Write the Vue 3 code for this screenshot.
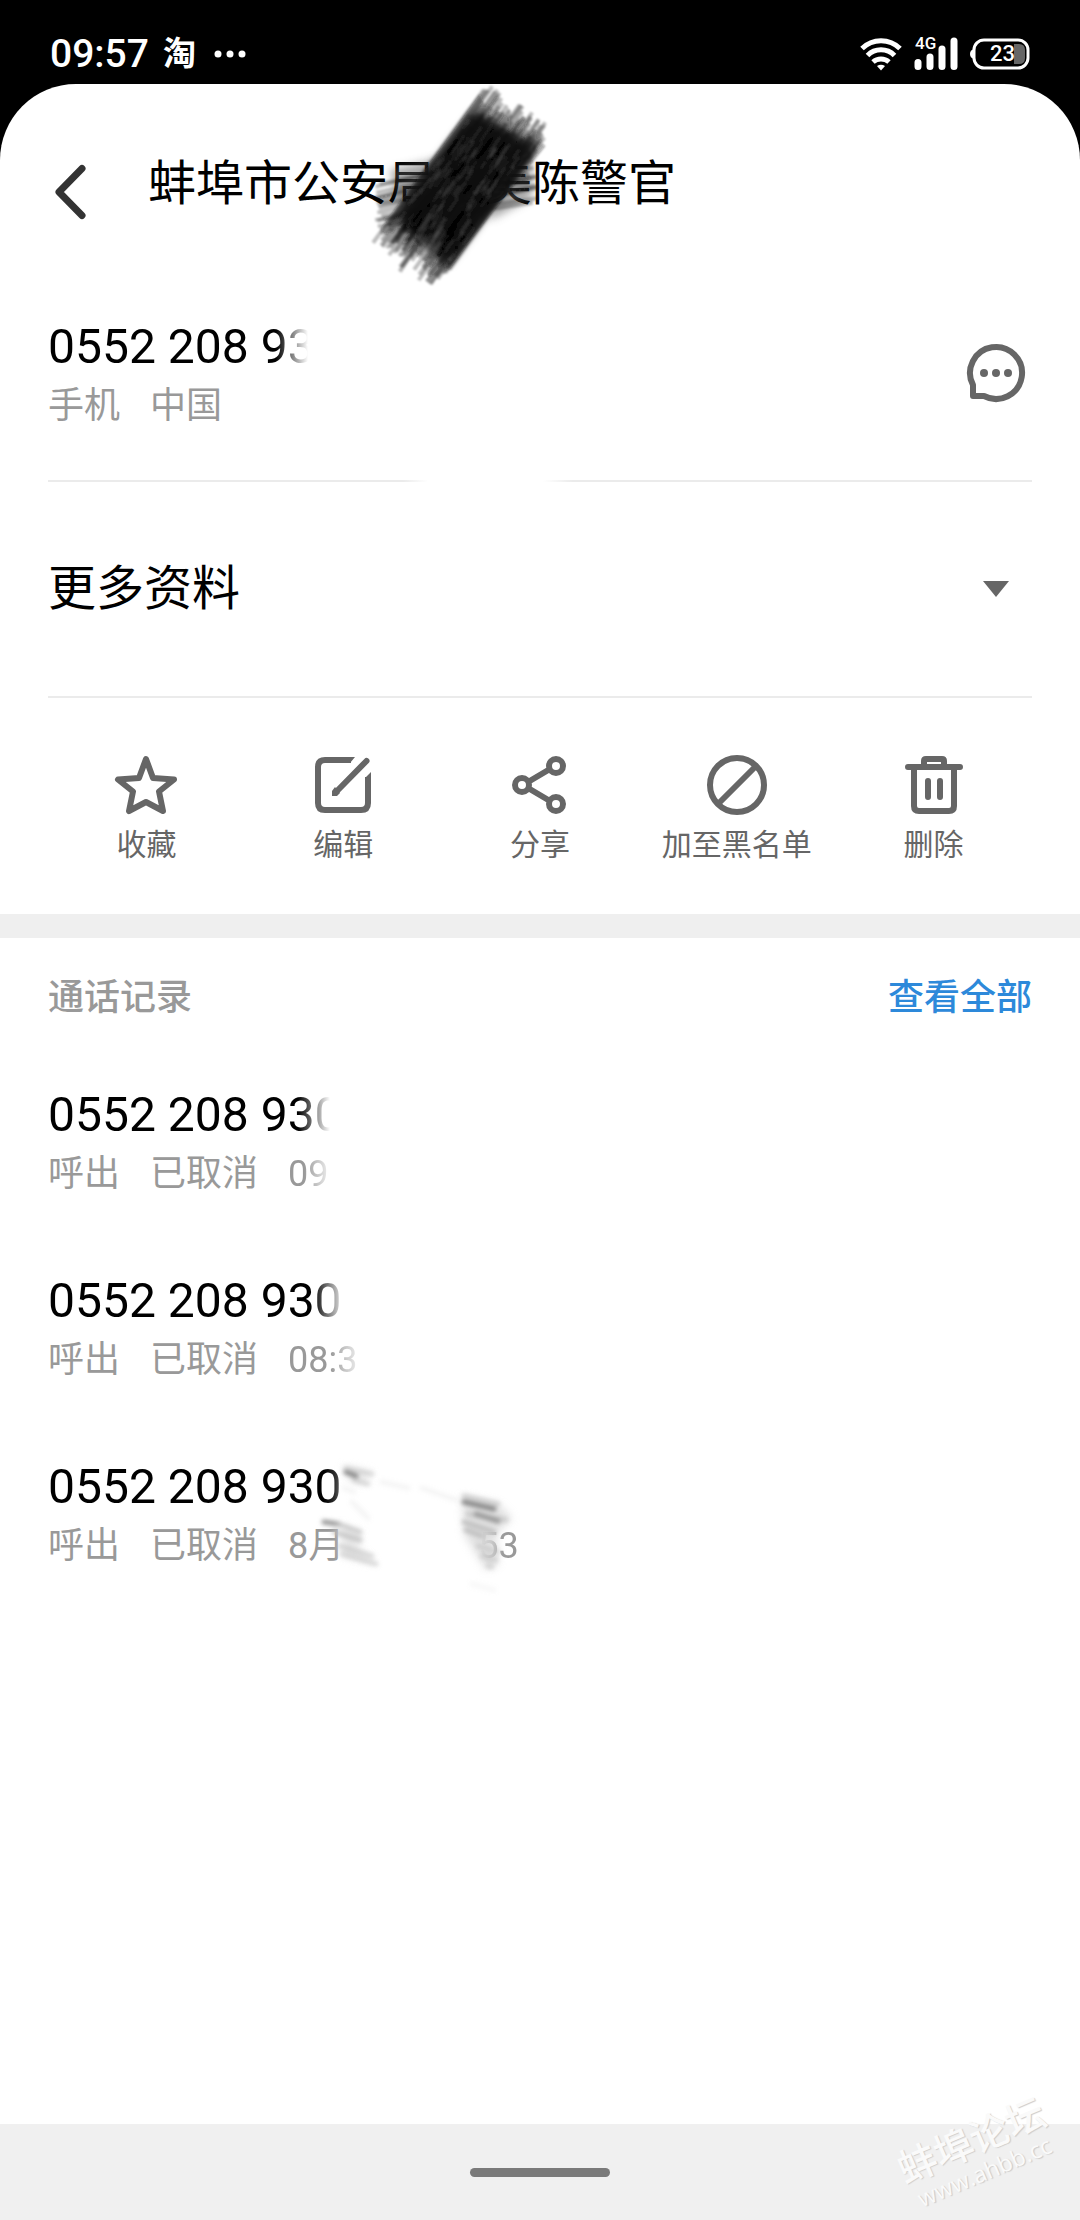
<script setup>
const number = '0552 208 93'

const actions = [
  { id: 'star', label: '收藏' },
  { id: 'edit', label: '编辑' },
  { id: 'share', label: '分享' },
  { id: 'block', label: '加至黑名单' },
  { id: 'trash', label: '删除' },
]

const calls = [
  { number: number + '0', time: '09', numberFade: [250, 282], timeFade: [16, 46] },
  { number: number + '0', time: '08:3', numberFade: [264, 298], timeFade: [42, 76] },
  { number: number + '0', time: '8月', tail: '53', numberFade: [276, 340] },
]

function fade(range) {
  if (!range) return null
  return { maskImage: `linear-gradient(to right, #000 ${range[0]}px, transparent ${range[1]}px)` }
}

// Small seeded generator, so that the brush strokes are the same on every load
let seed = 11
function rnd() {
  seed = (seed * 16807) % 2147483647
  return seed / 2147483647
}

function brush(count, from, to, spread) {
  return Array.from({ length: count }, (_, i) => {
    const t = (i + rnd()) / count
    const a = (rnd() - 0.5) * spread
    const b = (rnd() - 0.5) * spread
    const x1 = from[0] + (from[2] - from[0]) * t + a * 0.57
    const y1 = from[1] + (from[3] - from[1]) * t - a * 0.82
    const x2 = to[0] + (to[2] - to[0]) * t + b * 0.57
    const y2 = to[1] + (to[3] - to[1]) * t - b * 0.82
    return `M${x1.toFixed(1)} ${y1.toFixed(1)}L${x2.toFixed(1)} ${y2.toFixed(1)}`
  })
}

// Short dabs scattered over the body of the scribble
function dabs(count, length) {
  return Array.from({ length: count }, () => {
    const u = rnd()
    const v = rnd()
    const x = 134 + 60 * u - 84 * v
    const y = 42 + 38 * u + 112 * v
    const l = length * (0.5 + rnd())
    return `M${x.toFixed(1)} ${y.toFixed(1)}l${(-0.57 * l).toFixed(1)} ${(0.82 * l).toFixed(1)}`
  })
}

const cross = brush(16, [36, 116, 40, 156], [190, 78, 196, 132], 16)
const outer = brush(90, [137, 28, 203, 70], [42, 158, 104, 208], 36)
const core = brush(34, [134, 48, 198, 84], [60, 142, 112, 190], 24)
const light = dabs(110, 16)
const dark = dabs(60, 24)
</script>

<template>
  <div class="phone">
    <header class="status">
      <span class="clock">09:57</span>
      <span class="tao">淘</span>
      <svg class="dots" width="34" height="10" viewBox="0 0 34 10" fill="#fff">
        <circle cx="5" cy="5" r="3.500" /><circle cx="17" cy="5" r="3.500" /><circle cx="29" cy="5" r="3.500" />
      </svg>
      <span class="spacer"></span>
      <svg width="42" height="34" viewBox="0 0 42 34" fill="none" stroke="#fff" stroke-width="5">
        <path d="M2 11.500a27 27 0 0 1 38 0" />
        <path d="M7.500 18.500a19 19 0 0 1 27 0" />
        <path d="M13 25a12 12 0 0 1 16 0" />
        <path d="M17 29q4-2.500 8 0l-4 4.500z" fill="#fff" stroke="none" />
      </svg>
      <span class="cell">
        <svg width="44" height="34" viewBox="0 0 44 34" stroke="#fff" stroke-width="7" stroke-linecap="round">
          <path d="M4 25.500v4M16 20v9.500M28 12v17.500M40 4v25.500" />
        </svg>
        <small class="net">4G</small>
      </span>
      <span class="battery">
        <svg width="60" height="32" viewBox="0 0 60 32">
          <path d="M4 11q-4 1-4 5t4 5z" fill="#fff" />
          <rect x="4" y="2" width="54" height="28" rx="10" fill="none" stroke="#fff" stroke-width="3" />
          <path d="M44 6h5q6 0 6 6v8q0 6-6 6h-5z" fill="#666" />
        </svg>
        <b class="level">23</b>
      </span>
    </header>

    <main class="card">
      <div class="head">
        <button class="back" type="button" aria-label="返回">
          <svg width="36" height="60" viewBox="0 0 36 60" fill="none" stroke="#333" stroke-width="7" stroke-linecap="round" stroke-linejoin="round">
            <path d="M30 6.500L7 30l23 23.500" />
          </svg>
        </button>
        <h1 class="name">蚌埠市公安局　美陈警官</h1>
        <svg class="scribble" width="240" height="240" viewBox="0 0 240 240" fill="none" stroke="#111" aria-hidden="true">
          <defs>
            <filter id="soft" x="-10%" y="-10%" width="120%" height="120%"><feGaussianBlur stdDeviation="1" /></filter>
            <filter id="softer" x="-10%" y="-10%" width="120%" height="120%"><feGaussianBlur stdDeviation="4" /></filter>
          </defs>
          <path d="M134 42L194 74L152 138L108 194L58 148L92 96Z" fill="#161616" stroke="none" filter="url(#softer)" />
          <path d="M50 100L100 88L80 130L58 128ZM160 96L192 92L192 128L150 150Z" fill="#555" opacity="0.5" stroke="none" filter="url(#softer)" />
          <g filter="url(#soft)">
            <path v-for="d in cross" :key="d" :d="d" stroke-width="4" opacity="0.26" />
            <path v-for="d in outer" :key="d" :d="d" stroke-width="4" opacity="0.26" />
            <path v-for="d in core" :key="d" :d="d" stroke-width="4" opacity="0.36" />
            <path v-for="d in light" :key="d" :d="d" stroke="#888" stroke-width="3" opacity="0.16" />
            <path v-for="d in dark" :key="d" :d="d" stroke="#000" stroke-width="4" opacity="0.3" />
          </g>
        </svg>
      </div>

      <section class="row">
        <div class="contact">
          <p class="number" :style="fade([228, 260])">{{ number }}</p>
          <p class="meta"><span>手机</span><span>中国</span></p>
        </div>
        <button class="message" type="button" aria-label="发送短信">
          <svg width="60" height="60" viewBox="0 0 60 60" fill="none" stroke="#666" stroke-width="6" stroke-linejoin="round">
            <path d="M7 42V53H18A26 26 0 1 0 7 42Z" />
            <g fill="#666" stroke="none"><circle cx="18" cy="30" r="4" /><circle cx="30" cy="30" r="4" /><circle cx="42" cy="30" r="4" /></g>
          </svg>
        </button>
      </section>
      <hr class="line wiped" />
      <button class="row more" type="button">
        <span>更多资料</span>
        <svg class="caret" width="26" height="16" viewBox="0 0 26 16"><path d="M0 0h26L13 16z" fill="#666" /></svg>
      </button>
      <hr class="line" />

      <nav class="actions">
        <button v-for="a in actions" :key="a.id" class="action" type="button">
          <svg width="64" height="64" viewBox="-2 -2 64 64" fill="none" stroke="#666" stroke-width="6">
            <path v-if="a.id === 'star'" stroke-linejoin="round" d="M30 4L37 23L58 24.500L43 36.500L47 56L30 47L13 56L17 36.500L2 24.500L23 23Z" />
            <g v-else-if="a.id === 'edit'">
              <path d="M38 5H12Q5 5 5 12V48Q5 55 12 55H48Q55 55 55 48V22" />
              <path d="M37 8V2H42ZM52 23L58 17V23Z" fill="#666" stroke="none" />
              <path d="M24 36L53.500 6" stroke-linecap="round" />
              <path d="M19 41V36L22 32L27 38L24 41Z" fill="#666" stroke="none" />
            </g>
            <g v-else-if="a.id === 'share'">
              <path d="M18 27L40 14M18 33L40 46" />
              <circle cx="12" cy="30" r="7" /><circle cx="46" cy="11" r="7" /><circle cx="46" cy="49" r="7" />
            </g>
            <g v-else-if="a.id === 'block'">
              <circle cx="30" cy="30" r="27" /><path d="M11 49L49 11" />
            </g>
            <g v-else stroke-linecap="round" stroke-linejoin="round">
              <path d="M4 12H56M20 11V6Q20 4 22 4H38Q40 4 40 6V11M10 13V51Q10 56 15 56H45Q50 56 50 51V13M24 26V42M36 26V42" />
            </g>
          </svg>
          <span>{{ a.label }}</span>
        </button>
      </nav>

      <section class="log">
        <div class="log-head">
          <h2>通话记录</h2>
          <a href="#all">查看全部</a>
        </div>
        <ul>
          <li v-for="(c, i) in calls" :key="i" class="call">
            <p class="number" :style="fade(c.numberFade)">{{ c.number }}</p>
            <p class="meta">
              <span>呼出</span><span>已取消</span>
              <span :style="fade(c.timeFade)">{{ c.time }}</span>
              <span v-if="c.tail" class="tail">{{ c.tail }}</span>
            </p>
            <svg v-if="c.tail" class="smudge" width="240" height="160" viewBox="0 -10 240 160" fill="none" stroke-linecap="round" aria-hidden="true">
              <defs>
                <filter id="smear" x="-20%" y="-20%" width="140%" height="140%"><feGaussianBlur stdDeviation="2" /></filter>
                <filter id="haze" x="-20%" y="-20%" width="140%" height="140%"><feGaussianBlur stdDeviation="4" /></filter>
              </defs>
              <path d="M50 10L180 40L178 76L192 80L188 110L70 112L50 94Z" fill="#fff" opacity="0.6" filter="url(#haze)" />
              <path d="M170 28L206 36L220 50L204 66L206 96L194 102L172 66Z" fill="#ccc" opacity="0.6" filter="url(#haze)" />
              <path d="M50 -2L80 4L72 16L56 12ZM48 56L70 66L66 80L84 96L50 88Z" fill="#ddd" opacity="0.7" filter="url(#haze)" />
              <g filter="url(#smear)" stroke="#bbb" stroke-width="5">
                <path d="M54 4L64 8" stroke="#888" />
                <path d="M54 0L80 6M62 12L76 16" opacity="0.5" />
                <path d="M52 20L62 24M60 34L76 50M90 14L116 20M130 20L164 32" opacity="0.14" />
                <path d="M32 54L46 56" stroke="#999" />
                <path d="M46 56L68 64M42 64L68 72" opacity="0.7" />
                <path d="M48 78L80 88M50 86L84 96" opacity="0.5" />
                <path d="M172 28L206 36M176 46L214 52" opacity="0.6" />
                <path d="M172 34L202 41" stroke="#888" />
                <path d="M184 46L206 53" stroke="#999" />
                <path d="M172 54L202 64M174 62L190 68" opacity="0.9" />
                <path d="M186 78L206 84M190 88L204 92M196 98L200 99" opacity="0.5" />
                <path d="M180 116L202 122" opacity="0.1" />
              </g>
            </svg>
          </li>
        </ul>
      </section>
    </main>

    <footer class="gesture"><span class="pill"></span></footer>
    <div class="watermark" aria-hidden="true">
      <span class="wm-name">蚌埠论坛</span>
      <span class="wm-url">www.ahbb.cc</span>
    </div>
  </div>
</template>

<style>
body { margin: 0; background: #000; }
</style>

<style scoped>
.phone {
  position: relative;
  display: flex;
  flex-direction: column;
  min-height: 100vh;
  overflow: hidden;
  background: #000;
  color: #000;
  font-family: Roboto, "Noto Sans CJK SC", sans-serif;
}
p, h1, h2, ul { margin: 0; padding: 0; font-weight: 400; }
ul { list-style: none; }
svg { display: block; flex: none; }
button {
  margin: 0;
  padding: 0;
  border: 0;
  background: none;
  color: inherit;
  font: inherit;
  text-align: left;
}

.status {
  display: flex;
  align-items: center;
  box-sizing: border-box;
  height: 84px;
  padding: 24px 50px 0;
  color: #fff;
}
.clock { font-size: 39px; line-height: 60px; font-weight: 500; }
.tao { margin-left: 14px; font-size: 33px; line-height: 60px; font-weight: 700; }
.dots { margin-left: 17px; }
.spacer { flex: 1; }
.cell, .battery { position: relative; margin-left: 12px; }
.net {
  position: absolute;
  top: -4px;
  left: 1px;
  font-size: 17px;
  line-height: 20px;
  font-weight: 500;
}
.level {
  position: absolute;
  top: 4px;
  left: 20px;
  font-size: 22px;
  line-height: 24px;
  font-weight: 500;
}

.card { flex: 1; border-radius: 76px 76px 0 0; background: #fff; }
.head {
  position: relative;
  display: flex;
  align-items: flex-start;
  box-sizing: border-box;
  height: 182px;
  padding: 70px 48px 0;
}
.back { display: flex; align-items: center; width: 100px; height: 76px; padding-left: 4px; box-sizing: border-box; }
.name { font-size: 48px; line-height: 60px; white-space: nowrap; }
.scribble { position: absolute; top: -14px; left: 340px; }

.row {
  display: flex;
  align-items: center;
  justify-content: space-between;
  box-sizing: border-box;
  width: 100%;
  height: 214px;
  padding: 0 48px;
}
.contact { padding-top: 4px; }
.number { font-size: 48px; line-height: 62px; white-space: nowrap; }
.meta {
  display: flex;
  gap: 30px;
  color: #999;
  font-size: 36px;
  line-height: 56px;
  white-space: nowrap;
}
.message { padding: 6px; }
.more { font-size: 48px; line-height: 60px; }
.caret { margin-right: 23px; }
.line { height: 2px; margin: 0 48px; border: 0; background: #ebebeb; }
.wiped { background: linear-gradient(to right, #ebebeb 355px, #fff 380px, #fff 495px, #ebebeb 525px); }

.actions {
  display: flex;
  box-sizing: border-box;
  height: 216px;
  padding: 55px 48px 0;
}
.action {
  display: flex;
  flex: 1;
  flex-direction: column;
  align-items: center;
  color: #666;
  font-size: 30px;
  line-height: 56px;
  white-space: nowrap;
}

.log { border-top: 24px solid #efefef; }
.log-head {
  display: flex;
  align-items: center;
  justify-content: space-between;
  box-sizing: border-box;
  height: 116px;
  padding: 4px 48px 0;
}
.log-head h2, .log-head a { font-size: 36px; line-height: 54px; font-weight: 500; }
.log-head h2 { color: #999; }
.log-head a { color: #2d89da; text-decoration: none; }
.call { position: relative; padding: 30px 48px 38px; }
.tail { margin-left: 104px; mask-image: linear-gradient(to right, transparent, #000 24px); }
.smudge { position: absolute; top: 32px; left: 292px; }

.gesture {
  display: flex;
  align-items: center;
  justify-content: center;
  height: 96px;
  background: #f0f0f0;
}
.pill { width: 140px; height: 9px; border-radius: 5px; background: #7a7a7a; }

.watermark {
  position: absolute;
  right: 26px;
  bottom: 36px;
  display: flex;
  flex-direction: column;
  align-items: center;
  color: #fafafa;
  text-shadow: 1px 1px 1px #ccc;
  transform: rotate(-23deg);
}
.wm-name { font-size: 39px; line-height: 42px; font-weight: 500; }
.wm-url { font-family: "Open Sans", sans-serif; font-size: 23px; line-height: 22px; }
</style>
